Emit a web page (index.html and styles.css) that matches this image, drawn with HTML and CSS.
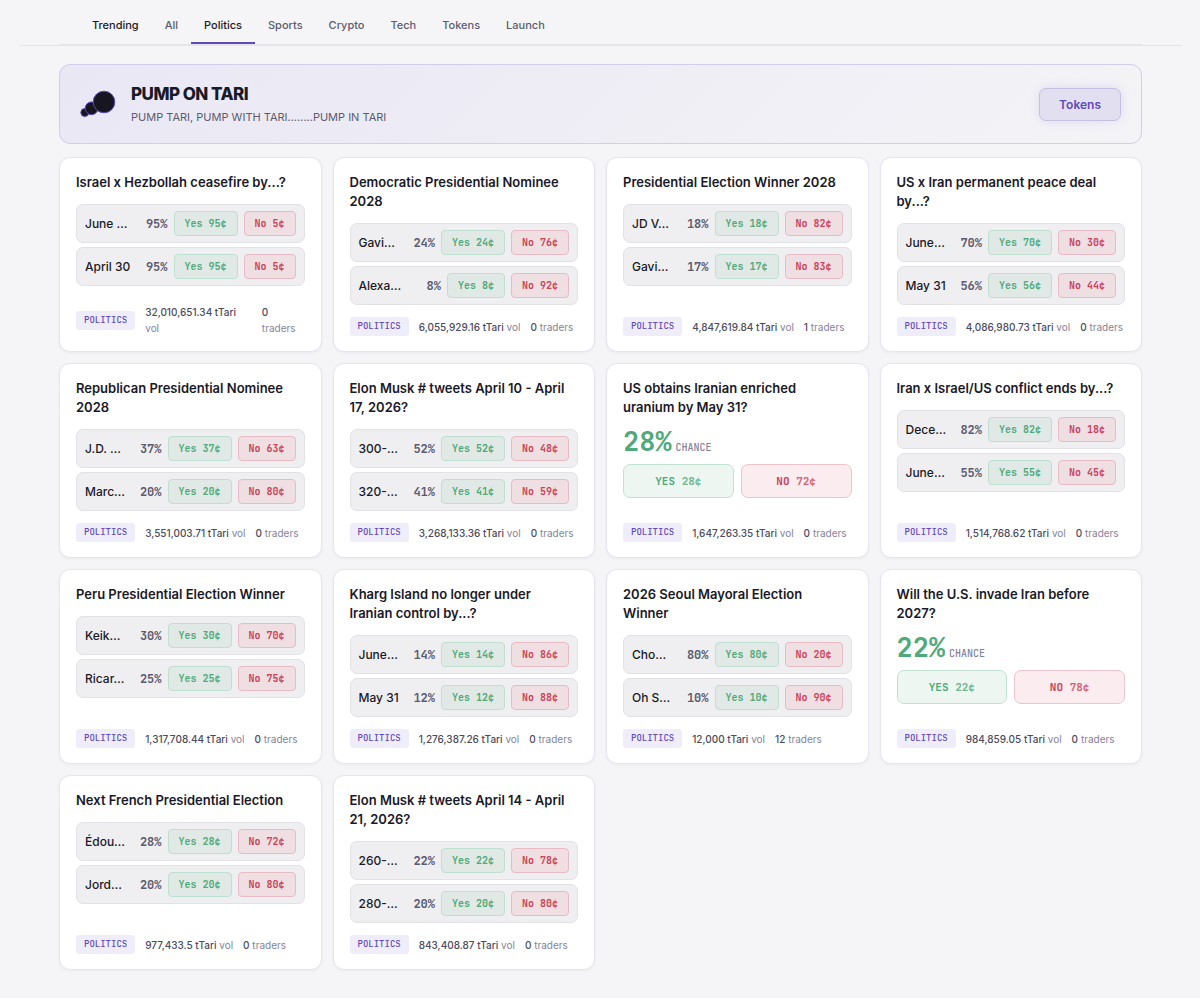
FILE: index.html
```html
<!DOCTYPE html>
<html lang="en">
<head>
<meta charset="utf-8">
<meta name="viewport" content="width=device-width, initial-scale=1">
<title>Politics markets</title>
<link rel="stylesheet" href="styles.css">
</head>
<body>
<div class="nav-wrap">
<nav class="tabs" aria-label="Categories">
<button class="tab strong">Trending</button>
<button class="tab">All</button>
<button class="tab active" aria-current="page">Politics</button>
<button class="tab">Sports</button>
<button class="tab">Crypto</button>
<button class="tab">Tech</button>
<button class="tab">Tokens</button>
<button class="tab">Launch</button>
</nav>
</div>
<main class="page">
<section class="banner">
<svg class="logo" viewBox="0 0 36 36" aria-hidden="true"><g fill="#17151f" stroke="#5f48c0"><circle cx="4.8" cy="26.5" r="4"/><circle cx="11.6" cy="22.3" r="6.4"/><circle cx="24" cy="16" r="10.8"/></g></svg>
<div class="banner-text">
<h1>PUMP ON TARI</h1>
<p>PUMP TARI, PUMP WITH TARI........PUMP IN TARI</p>
</div>
<button class="banner-btn">Tokens</button>
</section>
<section class="grid">
<article class="card"><h2>Israel x Hezbollah ceasefire by...?</h2>
<div class="row"><span class="name">June …</span><span class="pct">95%</span><button class="buy yes">Yes 95¢</button><button class="buy no">No 5¢</button></div>
<div class="row"><span class="name">April 30</span><span class="pct">95%</span><button class="buy yes">Yes 95¢</button><button class="buy no">No 5¢</button></div>
<footer><span class="tag">POLITICS</span><span><b>32,010,651.34 tTari</b> vol</span><span><b>0</b> traders</span></footer></article>
<article class="card"><h2>Democratic Presidential Nominee 2028</h2>
<div class="row"><span class="name">Gavi…</span><span class="pct">24%</span><button class="buy yes">Yes 24¢</button><button class="buy no">No 76¢</button></div>
<div class="row"><span class="name">Alexa…</span><span class="pct">8%</span><button class="buy yes">Yes 8¢</button><button class="buy no">No 92¢</button></div>
<footer><span class="tag">POLITICS</span><span><b>6,055,929.16 tTari</b> vol</span><span><b>0</b> traders</span></footer></article>
<article class="card"><h2>Presidential Election Winner 2028</h2>
<div class="row"><span class="name">JD V…</span><span class="pct">18%</span><button class="buy yes">Yes 18¢</button><button class="buy no">No 82¢</button></div>
<div class="row"><span class="name">Gavi…</span><span class="pct">17%</span><button class="buy yes">Yes 17¢</button><button class="buy no">No 83¢</button></div>
<footer><span class="tag">POLITICS</span><span><b>4,847,619.84 tTari</b> vol</span><span><b>1</b> traders</span></footer></article>
<article class="card"><h2>US x Iran permanent peace deal by...?</h2>
<div class="row"><span class="name">June…</span><span class="pct">70%</span><button class="buy yes">Yes 70¢</button><button class="buy no">No 30¢</button></div>
<div class="row"><span class="name">May 31</span><span class="pct">56%</span><button class="buy yes">Yes 56¢</button><button class="buy no">No 44¢</button></div>
<footer><span class="tag">POLITICS</span><span><b>4,086,980.73 tTari</b> vol</span><span><b>0</b> traders</span></footer></article>
<article class="card"><h2>Republican Presidential Nominee 2028</h2>
<div class="row"><span class="name">J.D. …</span><span class="pct">37%</span><button class="buy yes">Yes 37¢</button><button class="buy no">No 63¢</button></div>
<div class="row"><span class="name">Marc…</span><span class="pct">20%</span><button class="buy yes">Yes 20¢</button><button class="buy no">No 80¢</button></div>
<footer><span class="tag">POLITICS</span><span><b>3,551,003.71 tTari</b> vol</span><span><b>0</b> traders</span></footer></article>
<article class="card"><h2>Elon Musk # tweets April 10 - April 17, 2026?</h2>
<div class="row"><span class="name">300-…</span><span class="pct">52%</span><button class="buy yes">Yes 52¢</button><button class="buy no">No 48¢</button></div>
<div class="row"><span class="name">320-…</span><span class="pct">41%</span><button class="buy yes">Yes 41¢</button><button class="buy no">No 59¢</button></div>
<footer><span class="tag">POLITICS</span><span><b>3,268,133.36 tTari</b> vol</span><span><b>0</b> traders</span></footer></article>
<article class="card"><h2>US obtains Iranian enriched uranium by May 31?</h2>
<p class="chance"><strong>28%</strong><span>CHANCE</span></p>
<div class="pair"><button class="big yes">YES <span>28¢</span></button><button class="big no">NO <span>72¢</span></button></div>
<footer><span class="tag">POLITICS</span><span><b>1,647,263.35 tTari</b> vol</span><span><b>0</b> traders</span></footer></article>
<article class="card"><h2>Iran x Israel/US conflict ends by...?</h2>
<div class="row"><span class="name">Dece…</span><span class="pct">82%</span><button class="buy yes">Yes 82¢</button><button class="buy no">No 18¢</button></div>
<div class="row"><span class="name">June…</span><span class="pct">55%</span><button class="buy yes">Yes 55¢</button><button class="buy no">No 45¢</button></div>
<footer><span class="tag">POLITICS</span><span><b>1,514,768.62 tTari</b> vol</span><span><b>0</b> traders</span></footer></article>
<article class="card"><h2>Peru Presidential Election Winner</h2>
<div class="row"><span class="name">Keik…</span><span class="pct">30%</span><button class="buy yes">Yes 30¢</button><button class="buy no">No 70¢</button></div>
<div class="row"><span class="name">Ricar…</span><span class="pct">25%</span><button class="buy yes">Yes 25¢</button><button class="buy no">No 75¢</button></div>
<footer><span class="tag">POLITICS</span><span><b>1,317,708.44 tTari</b> vol</span><span><b>0</b> traders</span></footer></article>
<article class="card"><h2>Kharg Island no longer under Iranian control by...?</h2>
<div class="row"><span class="name">June…</span><span class="pct">14%</span><button class="buy yes">Yes 14¢</button><button class="buy no">No 86¢</button></div>
<div class="row"><span class="name">May 31</span><span class="pct">12%</span><button class="buy yes">Yes 12¢</button><button class="buy no">No 88¢</button></div>
<footer><span class="tag">POLITICS</span><span><b>1,276,387.26 tTari</b> vol</span><span><b>0</b> traders</span></footer></article>
<article class="card"><h2>2026 Seoul Mayoral Election Winner</h2>
<div class="row"><span class="name">Cho…</span><span class="pct">80%</span><button class="buy yes">Yes 80¢</button><button class="buy no">No 20¢</button></div>
<div class="row"><span class="name">Oh S…</span><span class="pct">10%</span><button class="buy yes">Yes 10¢</button><button class="buy no">No 90¢</button></div>
<footer><span class="tag">POLITICS</span><span><b>12,000 tTari</b> vol</span><span><b>12</b> traders</span></footer></article>
<article class="card"><h2>Will the U.S. invade Iran before 2027?</h2>
<p class="chance"><strong>22%</strong><span>CHANCE</span></p>
<div class="pair"><button class="big yes">YES <span>22¢</span></button><button class="big no">NO <span>78¢</span></button></div>
<footer><span class="tag">POLITICS</span><span><b>984,859.05 tTari</b> vol</span><span><b>0</b> traders</span></footer></article>
<article class="card"><h2>Next French Presidential Election</h2>
<div class="row"><span class="name">Édou…</span><span class="pct">28%</span><button class="buy yes">Yes 28¢</button><button class="buy no">No 72¢</button></div>
<div class="row"><span class="name">Jord…</span><span class="pct">20%</span><button class="buy yes">Yes 20¢</button><button class="buy no">No 80¢</button></div>
<footer><span class="tag">POLITICS</span><span><b>977,433.5 tTari</b> vol</span><span><b>0</b> traders</span></footer></article>
<article class="card"><h2>Elon Musk # tweets April 14 - April 21, 2026?</h2>
<div class="row"><span class="name">260-…</span><span class="pct">22%</span><button class="buy yes">Yes 22¢</button><button class="buy no">No 78¢</button></div>
<div class="row"><span class="name">280-…</span><span class="pct">20%</span><button class="buy yes">Yes 20¢</button><button class="buy no">No 80¢</button></div>
<footer><span class="tag">POLITICS</span><span><b>843,408.87 tTari</b> vol</span><span><b>0</b> traders</span></footer></article>
</section>
</main>
</body>
</html>
```
FILE: styles.css
```css
:root {
  --mono: "JetBrains Mono", "DejaVu Sans Mono", monospace;
  --ink: #1a1928;
  --dim: #5c5b70;
  --accent: #6149bd;
}
* { box-sizing: border-box; }
body {
  margin: 0;
  background: #f5f5f7;
  color: var(--ink);
  font-family: Inter, sans-serif;
}
button { font-family: inherit; cursor: pointer; }
.nav-wrap {
  margin: 0 18px 0 19px;
  padding: 0 40px;
  border-bottom: 1px solid #e4e4e9;
}
.tabs {
  display: flex;
  padding: 6px 20px 0;
  border-bottom: 1px solid #e4e4e9;
}
.tab {
  padding: 12px 13px 10px;
  border: 0;
  border-bottom: 2px solid transparent;
  background: none;
  color: var(--dim);
  font-size: 11px;
  line-height: 14px;
  font-weight: 500;
}
.tab.strong { color: var(--ink); }
.tab.active { color: var(--ink); border-bottom-color: var(--accent); }
.page { padding: 18px 58px 27px 59px; }
.banner {
  display: flex;
  align-items: center;
  gap: 15px;
  min-height: 80px;
  margin-bottom: 13px;
  padding: 16px 20px;
  border: 1px solid #d2cdea;
  border-radius: 11px;
  background: linear-gradient(135deg, #e9e7f4, #f4f4f7);
}
.logo { width: 36px; height: 36px; flex: none; overflow: visible; }
.banner-text { flex: 1; }
.banner h1 {
  margin: 0;
  font-size: 17px;
  line-height: 24px;
  font-weight: 800;
  letter-spacing: -0.03em;
}
.banner p {
  margin: 2px 0 0;
  color: var(--dim);
  font-size: 11px;
  line-height: 18px;
}
.banner-btn {
  padding: 8px 19px;
  border: 1px solid #c5bfe4;
  border-radius: 7px;
  background: #e2dff1;
  box-shadow: 0 0 12px rgba(97, 73, 189, 0.14);
  color: var(--accent);
  font-size: 12px;
  line-height: 15px;
  font-weight: 600;
}
.grid {
  display: grid;
  grid-template-columns: repeat(auto-fill, minmax(240px, 1fr));
  gap: 11px;
}
.card {
  display: flex;
  flex-direction: column;
  padding: 15px 16px;
  border: 1px solid #e6e4f0;
  border-radius: 11px;
  background: #fff;
  box-shadow: 0 1px 3px rgba(30, 25, 60, 0.05);
}
.card h2 {
  margin: 0 0 12px;
  padding-right: 4px;
  font-size: 13px;
  line-height: 19px;
  font-weight: 600;
}
.row {
  display: flex;
  align-items: center;
  gap: 6px;
  padding: 6px 8px;
  border: 1px solid #e1e1e6;
  border-radius: 7px;
  background: #efeff2;
}
.row + .row { margin-top: 4px; }
.name {
  flex: 1;
  min-width: 0;
  font-size: 12px;
  font-weight: 500;
  white-space: nowrap;
}
.pct {
  color: var(--dim);
  font: 700 12px/16px var(--mono);
}
.buy {
  padding: 5px 10px;
  border: 1px solid;
  border-radius: 4px;
  font: 700 10px/13px var(--mono);
}
.buy.yes { color: #50a97a; border-color: #bfdfd0; background: #e0e9e6; }
.buy.no { color: #cb4359; border-color: #e8bac4; background: #efdfe3; }
.chance {
  display: flex;
  align-items: baseline;
  gap: 4px;
  margin: -4px 0 7px;
  color: #84839a;
}
.chance strong { color: #50a97a; font: 700 27px/32px var(--mono); }
.chance span { font: 500 10px/12px var(--mono); }
.pair {
  display: grid;
  grid-template-columns: 1fr 1fr;
  gap: 7px;
}
.big {
  padding: 9px 8px;
  border: 1px solid;
  border-radius: 7px;
  font: 700 11px/14px var(--mono);
}
.big span { opacity: 0.8; font-weight: 600; }
.big.yes { color: #50a97a; border-color: #c1e2d2; background: #edf6f1; }
.big.no { color: #cb4359; border-color: #efc4cd; background: #faecef; }
.card footer {
  display: flex;
  align-items: center;
  gap: 10px;
  margin-top: auto;
  padding-top: 12px;
  color: #84839a;
  font-size: 10px;
  line-height: 16px;
}
.card b { color: #4c4b60; font-weight: 500; }
.tag {
  flex: none;
  padding: 3px 8px;
  border-radius: 3px;
  background: #f0edfa;
  color: var(--accent);
  font: 500 9px/13px var(--mono);
}
```
